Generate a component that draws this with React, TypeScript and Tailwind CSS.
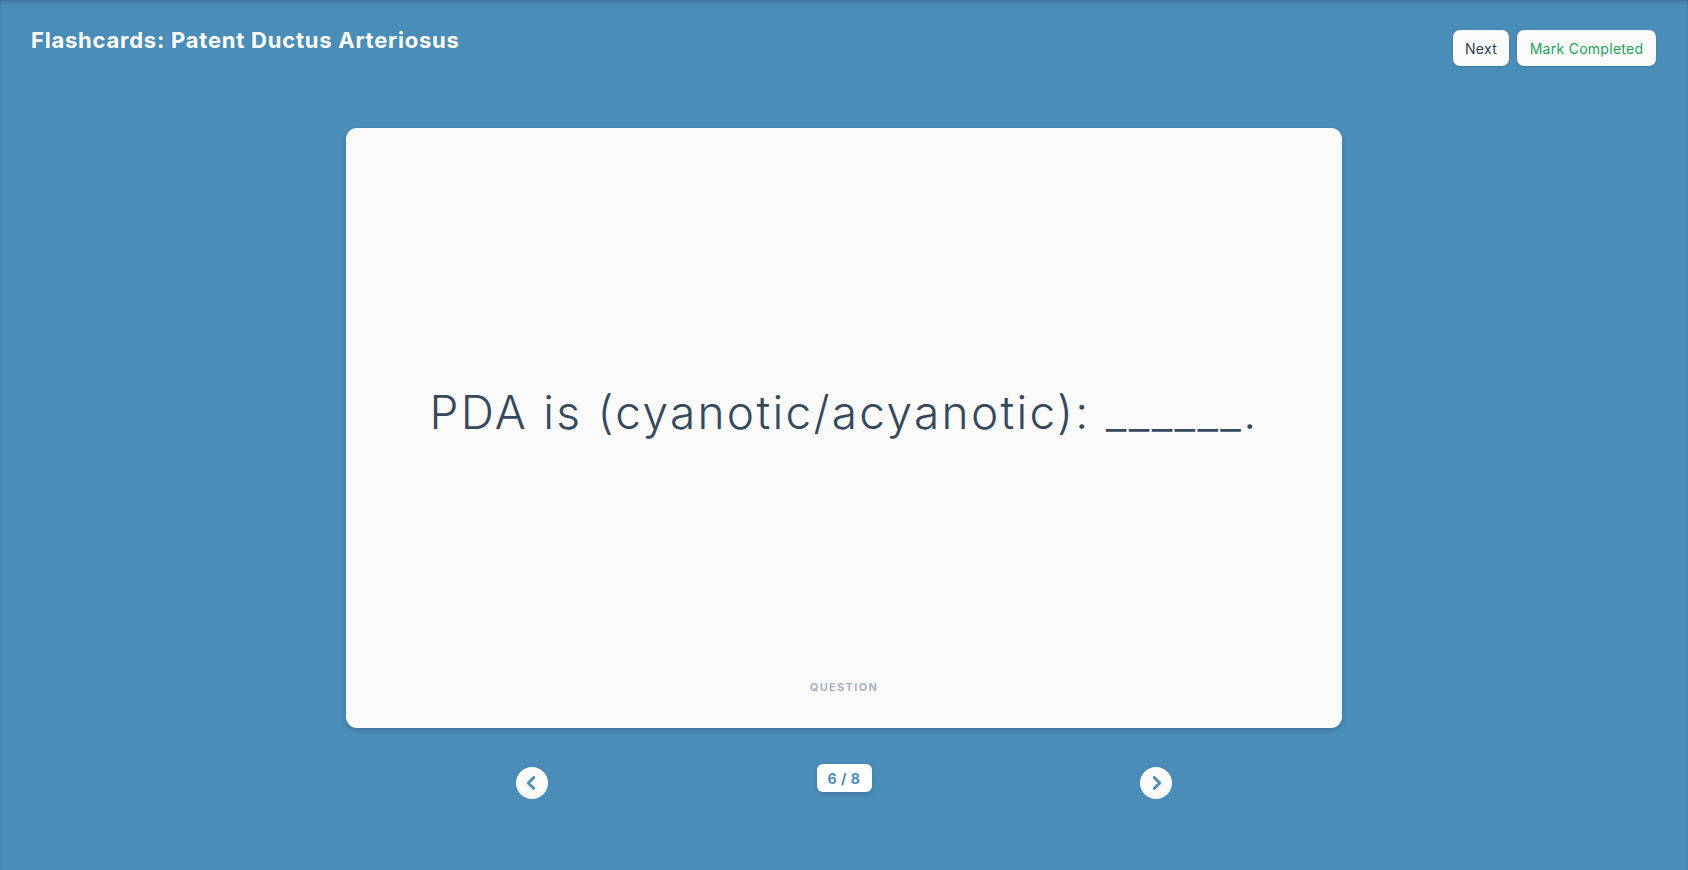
import { ChevronLeft, ChevronRight } from 'lucide-react';

const font = { fontFamily: 'Inter, "Open Sans", sans-serif' };

export default function App() {
  return (
    <div
      className="min-h-[870px] w-full bg-[#4a8db8] shadow-[inset_0_3px_4px_-2px_rgba(0,0,0,0.25)]"
      style={font}
    >
      {/* Header */}
      <div className="flex items-start justify-between pl-[31px] pr-[32px] pt-[30px]">
        <h1 className="mt-[-4px] text-[22px] font-bold leading-[28px] tracking-[0.035em] text-white">
          Flashcards: Patent Ductus Arteriosus
        </h1>
        <div className="flex gap-2">
          <button className="h-[36px] w-[56px] rounded-[7px] bg-[#fafafa] text-[14px] tracking-[0.02em] text-[#2d3e50] shadow-sm">
            Next
          </button>
          <button className="h-[36px] w-[139px] rounded-[7px] bg-[#fafafa] text-[14px] tracking-[0.02em] text-[#22a45a] shadow-sm">
            Mark Completed
          </button>
        </div>
      </div>

      {/* Card */}
      <div className="mx-auto mt-[62px] w-[996px]">
        <div className="relative flex h-[600px] items-center justify-center rounded-[11px] bg-[#fafafa] pb-[32px] shadow-[0_2px_4px_rgba(0,0,0,0.18)]">
          <p className="text-[46px] font-light leading-[56px] tracking-[0.05em] text-[#34495e]">
            PDA is (cyanotic/acyanotic): ______.
          </p>
          <span className="absolute bottom-[33px] left-0 right-0 text-center text-[11px] font-bold tracking-[0.12em] text-[#a8b3c2]">
            QUESTION
          </span>
        </div>

        {/* Navigation */}
        <div className="mx-auto mt-[36px] flex w-[656px] items-start justify-between">
          <button className="mt-[3px] flex h-[32px] w-[32px] items-center justify-center rounded-full bg-[#fafafa] text-[#4a8db8]">
            <ChevronLeft size={22} strokeWidth={3} className="mr-[2px]" />
          </button>
          <div className="flex h-[28px] w-[55px] items-center justify-center rounded-[6px] bg-white text-[14px] font-bold tracking-[0.04em] text-[#4a8db8] shadow-[0_2px_4px_rgba(0,0,0,0.15)]">
            6 / 8
          </div>
          <button className="mt-[3px] flex h-[32px] w-[32px] items-center justify-center rounded-full bg-[#fafafa] text-[#4a8db8]">
            <ChevronRight size={22} strokeWidth={3} className="ml-[2px]" />
          </button>
        </div>
      </div>
    </div>
  );
}
